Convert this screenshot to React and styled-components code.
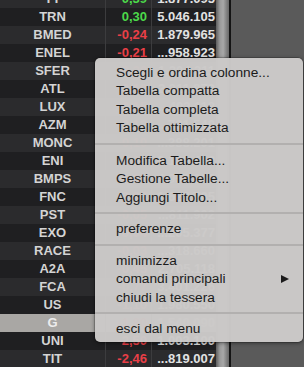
import styled, { createGlobalStyle } from 'styled-components'

const GlobalStyle = createGlobalStyle`
  html, body {
    margin: 0;
    padding: 0;
    background: #5a5a5a;
    overflow: hidden;
  }
  body {
    font-family: 'Liberation Sans', Arial, sans-serif;
  }
`

const rows = [
  { sym: 'TT', chg: '0,39', price: '1.877.095' },
  { sym: 'TRN', chg: '0,30', price: '5.046.105' },
  { sym: 'BMED', chg: '-0,24', price: '1.879.965' },
  { sym: 'ENEL', chg: '-0,21', price: '...958.923' },
  { sym: 'SFER', chg: '-0,20', price: '1.204.311' },
  { sym: 'ATL', chg: '-0,18', price: '2.311.870' },
  { sym: 'LUX', chg: '-0,15', price: '...402.118' },
  { sym: 'AZM', chg: '-0,12', price: '...731.540' },
  { sym: 'MONC', chg: '-0,10', price: '...388.201' },
  { sym: 'ENI', chg: '-0,09', price: '3.120.442' },
  { sym: 'BMPS', chg: '-0,08', price: '4.950.310' },
  { sym: 'FNC', chg: '-0,06', price: '1.622.705' },
  { sym: 'PST', chg: '-0,05', price: '...811.902' },
  { sym: 'EXO', chg: '-0,04', price: '...205.377' },
  { sym: 'RACE', chg: '-0,03', price: '...318.660' },
  { sym: 'A2A', chg: '-0,45', price: '2.705.118' },
  { sym: 'FCA', chg: '-0,77', price: '3.401.226' },
  { sym: 'US', chg: '-1,10', price: '1.980.550' },
  { sym: 'G', chg: '-1,80', price: '1.540.090', selected: true },
  { sym: 'UNI', chg: '-2,50', price: '1.003.100' },
  { sym: 'TIT', chg: '-2,46', price: '...819.007' },
]

// menu groups, split by separators
const menu = [
  [{ label: 'Scegli e ordina colonne...' }, { label: 'Tabella compatta' }, { label: 'Tabella completa' }, { label: 'Tabella ottimizzata' }],
  [{ label: 'Modifica Tabella...' }, { label: 'Gestione Tabelle...' }, { label: 'Aggiungi Titolo...' }],
  [{ label: 'preferenze' }],
  [{ label: 'minimizza' }, { label: 'comandi principali', sub: true }, { label: 'chiudi la tessera' }],
  [{ label: 'esci dal menu' }],
]

const App = () => {
  return (
    <>
      <GlobalStyle />
      <Screen>
        <Table>
          {rows.map((r, i) => (
            <Row key={r.sym} $alt={i % 2 === 1} $selected={r.selected}>
              <Sym>{r.sym}</Sym>
              <Change $up={!r.chg.startsWith('-')}>{r.chg}</Change>
              <Price>{r.price}</Price>
            </Row>
          ))}
        </Table>
        <Scrollbar />
        <Empty />
        <Menu>
          {menu.map((group, gi) => (
            <Group key={gi}>
              {gi > 0 && <Separator $wide={gi === 1} />}
              {group.map(item => (
                <Item key={item.label}>
                  <span>{item.label}</span>
                  {item.sub && <Arrow />}
                </Item>
              ))}
            </Group>
          ))}
        </Menu>
      </Screen>
    </>
  )
}

const Screen = styled.div`
  position: relative;
  display: flex;
  width: 304px;
  height: 367px;
  overflow: hidden;
  background: #5a5a5a;
`

const Table = styled.div`
  width: 216px;
  margin-top: -10px;
  display: flex;
  flex-direction: column;
`

const Row = styled.div`
  display: grid;
  grid-template-columns: 106px 46px 64px;
  height: 18px;
  align-items: center;
  font-size: 13px;
  font-weight: bold;
  background: ${p => (p.$selected ? '#a9a7a4' : p.$alt ? '#1f1f21' : '#2b2b2d')};
  color: ${p => (p.$selected ? '#ececec' : '#d4d4d4')};
`

const Sym = styled.div`
  text-align: center;
  height: 18px;
  line-height: 18px;
  border-right: 1px solid #3c3c3e;
`

const Change = styled.div`
  text-align: right;
  padding-right: 4px;
  height: 18px;
  line-height: 18px;
  color: ${p => (p.$up ? '#4cd94a' : '#ea3f47')};
  border-right: 1px solid #3c3c3e;
`

const Price = styled.div`
  text-align: right;
  padding-right: 1px;
  height: 18px;
  line-height: 18px;
  color: #e2e2e2;
  white-space: nowrap;
  overflow: hidden;
`

const Scrollbar = styled.div`
  width: 13px;
  background: linear-gradient(to right, #5e5e5e 0%, #9a9a9a 30%, #a8a8a8 55%, #7c7c7c 85%, #6a6a6a 100%);
  border-right: 2px solid #141414;
`

const Empty = styled.div`
  flex: 1;
  background: #5a5a5a;
`

const Menu = styled.div`
  position: absolute;
  left: 95px;
  top: 58px;
  width: 208px;
  padding: 5px 0 4px;
  box-sizing: border-box;
  background: rgba(203, 201, 200, 0.98);
  border-radius: 5px;
  box-shadow: 0 1px 4px rgba(0, 0, 0, 0.45), 0 0 0 0.5px rgba(0, 0, 0, 0.35);
  color: #1b1b1b;
  font-family: 'Liberation Sans', Arial, sans-serif;
  font-size: 13.7px;
`

const Group = styled.div`
  display: flex;
  flex-direction: column;
`

const Separator = styled.div`
  height: ${p => (p.$wide ? '14px' : '13px')};
  display: flex;
  align-items: center;
  &::before {
    content: '';
    flex: 1;
    height: 2px;
    background: #b2b0af;
  }
`

const Item = styled.div`
  height: 18.5px;
  display: flex;
  align-items: center;
  justify-content: space-between;
  padding: 0 14px 0 21px;
  white-space: nowrap;
`

const Arrow = styled.span`
  width: 0;
  height: 0;
  border-top: 4.5px solid transparent;
  border-bottom: 4.5px solid transparent;
  border-left: 8px solid #1b1b1b;
`

export default App
